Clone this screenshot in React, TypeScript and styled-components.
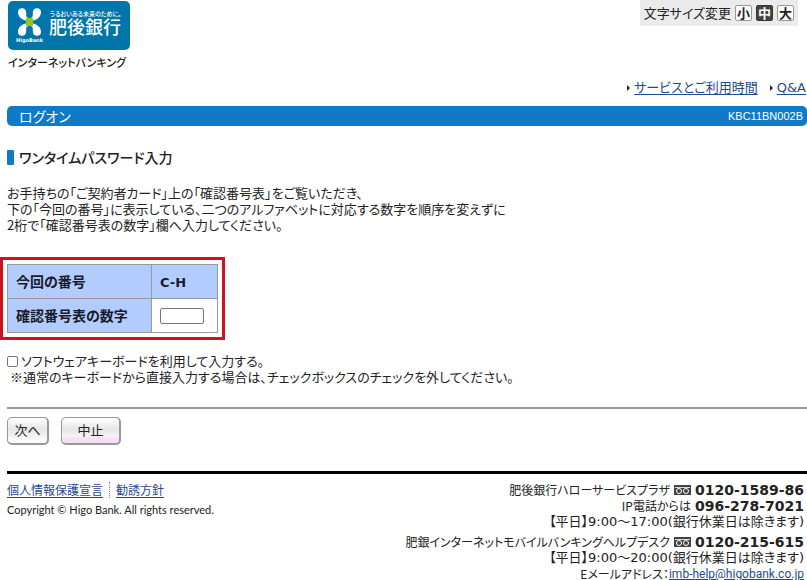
import React, { useState } from "react";
import styled, { createGlobalStyle } from "styled-components";

const sans = `"Noto Sans CJK JP", sans-serif`;
const wideLatin = `"DejaVu Sans", ${sans}`;

const GlobalStyle = createGlobalStyle`
  * { box-sizing: border-box; }
  body {
    margin: 0;
    background: #fff;
    color: #222;
    font-family: ${sans};
    font-size: 13px;
    line-height: 16px;
    font-feature-settings: "palt";
  }
  button, input { font: inherit; font-feature-settings: inherit; }
`;

const Page = styled.div`
  padding-left: 7px;
`;

const Header = styled.header`
  display: flex;
  justify-content: space-between;
  align-items: flex-start;
  height: 80px;
`;

const Brand = styled.div`
  padding: 1px 0 0 1px;
`;

const LogoSvg = styled.svg`
  display: block;
`;

const BrandCaption = styled.div`
  margin-top: 4px;
  font-size: 11px;
  font-weight: 500;
`;

const SizeBar = styled.div`
  display: flex;
  align-items: center;
  gap: 4px;
  height: 26px;
  margin-right: 9px;
  padding: 0 4px;
  background: #ebebeb;
`;

const SizeButton = styled.button<{ $active: boolean }>`
  display: flex;
  align-items: center;
  justify-content: center;
  width: 17px;
  height: 16px;
  padding: 0;
  border: 1px solid ${(p) => (p.$active ? "#333" : "#999")};
  border-radius: 2px;
  background: ${(p) => (p.$active ? "#444" : "#fff")};
  color: ${(p) => (p.$active ? "#fff" : "#222")};
  font-size: 13px;
  font-weight: 700;
`;

const Link = styled.a`
  color: #1f4a8f;
  text-decoration: underline;
  text-underline-offset: 2px;
`;

const HelpNav = styled.nav`
  display: flex;
  justify-content: flex-end;
  gap: 12px;
  padding-right: 1px;
  font-family: ${wideLatin};
`;

const HelpItem = styled.span`
  display: flex;
  align-items: center;
  gap: 4px;

  &::before {
    content: "";
    border: solid transparent;
    border-width: 3px 0 3px 3px;
    border-left-color: #222;
  }
`;

const TitleBar = styled.div`
  display: flex;
  align-items: center;
  justify-content: space-between;
  height: 20px;
  margin-top: 10px;
  padding: 0 4px 0 12px;
  border-radius: 5px;
  background: #107ac6;
  color: #fff;
`;

const Title = styled.h1`
  margin: 0;
  font-size: 14px;
  font-weight: 400;
`;

const ScreenCode = styled.span`
  font-family: "Liberation Sans", sans-serif;
  font-size: 11px;
`;

const SectionTitle = styled.h2`
  display: flex;
  align-items: center;
  gap: 5px;
  margin: 23px 0 0;
  font-size: 14px;
  font-weight: 500;

  &::before {
    content: "";
    width: 7px;
    height: 15px;
    border-radius: 1px;
    background: #107ac6;
  }
`;

const Lead = styled.p`
  margin: 20px 0 0;
`;

const Highlight = styled.div`
  width: fit-content;
  margin: 24px 0 0 -7px;
  padding: 4px;
  border: 3px solid #d0121b;
`;

const CodeTable = styled.table`
  border-collapse: collapse;
  font-family: ${sans};
  font-size: 14px;
  font-weight: 700;
  color: #1a1a2a;
`;

const HeadCell = styled.th`
  width: 144px;
  height: 34px;
  padding: 0 8px 2px;
  border: 1px solid #999;
  background: #b3ccff;
  text-align: left;
`;

const Cell = styled.td<{ $filled?: boolean }>`
  width: 66px;
  padding: 0 8px;
  border: 1px solid #999;
  background: ${(p) => (p.$filled ? "#b3ccff" : "#fff")};
`;

const CodePair = styled.span`
  font-family: "DejaVu Sans", sans-serif;
  font-size: 13px;
`;

const CodeInput = styled.input`
  display: block;
  width: 44px;
  height: 16px;
  padding: 0 3px;
  border: 1px solid #777;
  border-radius: 2px;
  background: #fff;
`;

const KeyboardOption = styled.div`
  margin-top: 13px;
`;

const CheckLabel = styled.label`
  display: flex;
  align-items: center;
  gap: 3px;
`;

const Checkbox = styled.input`
  appearance: none;
  width: 11px;
  height: 11px;
  margin: 0;
  border: 1px solid #777;
  border-radius: 2px;
  background: #fff;

  &:checked { background: #107ac6; }
`;

const Note = styled.p`
  margin: 0 0 0 3px;
`;

const Actions = styled.div`
  display: flex;
  gap: 12px;
  margin-top: 22px;
  padding: 8px 0 26px;
  border-top: 2px solid #999;
`;

const ActionButton = styled.button<{ $wide?: boolean }>`
  width: ${(p) => (p.$wide ? 60 : 42)}px;
  height: 28px;
  padding: 0 0 1px;
  border: 1px solid #999;
  border-width: 1px 2px 2px 1px;
  border-radius: 5px;
  background: ${(p) =>
    p.$wide
      ? "linear-gradient(#fff 0, #e6e6e6 45%, #f4f4f4 75%, #f8dff8 80%)"
      : "linear-gradient(#fff 0, #e6e6e6 45%, #fafafa 90%)"};
  color: #222;
`;

const Footer = styled.footer`
  display: flex;
  justify-content: space-between;
  padding: 8px 3px 0 0;
  border-top: 3px solid #000;
`;

const PolicyLinks = styled.div`
  display: flex;
  align-items: center;
  font-size: 12px;
`;

const Divider = styled.span`
  height: 16px;
  margin: 0 6px;
  border-left: 1px dotted #888;
`;

const Copyright = styled.small`
  display: block;
  margin-top: 4px;
  font-family: Lato, sans-serif;
  font-size: 11px;
`;

const Contact = styled.address`
  font-size: 12px;
  font-style: normal;
  text-align: right;
`;

const ContactGroup = styled.div`
  margin-bottom: 4px;
`;

const ContactLine = styled.div`
  display: flex;
  align-items: center;
  justify-content: flex-end;
  gap: 4px;
  height: 16px;
`;

const Phone = styled.b`
  font-family: "DejaVu Sans", sans-serif;
  font-size: 14px;
`;

const Hours = styled(ContactLine)`
  font-family: ${wideLatin};
  font-size: 13px;
`;

const MailLine = styled(ContactLine)`
  gap: 0;
`;

const MailLink = styled(Link)`
  font-family: Roboto, sans-serif;
  font-size: 12px;
  line-height: 14px;
  text-underline-offset: 1px;
`;

const Logo = () => (
  <LogoSvg width="122" height="49" viewBox="0 0 122 49" role="img" aria-label="肥後銀行">
    <rect width="122" height="49" rx="5" fill="#0075a9" />
    <g fill="#fff">
      <path id="petal" d="M10 11C10 8.500 11.500 7.200 14 7.200C16.800 7.200 18.200 9 18.200 12V14.500C18.200 16 19 16.800 21 17V20C15 19.500 10 16.500 10 11Z" />
      <use href="#petal" transform="matrix(-1 0 0 1 43 0)" />
      <use href="#petal" transform="matrix(1 0 0 -1 0 42)" />
      <use href="#petal" transform="matrix(-1 0 0 -1 43 42)" />
    </g>
    <rect x="18" y="17" width="7" height="8" fill="#94c61e" />
    <g fill="#fff" fontFamily={sans}>
      <text x="8" y="41" fontSize="5" fontWeight="700" fontFamily="DejaVu Sans, sans-serif">HigoBank</text>
      <text x="42" y="15" fontSize="6" fontWeight="500">うるおいある未来のために。</text>
      <text x="41" y="33" fontSize="18" fontWeight="500">肥後銀行</text>
    </g>
  </LogoSvg>
);

const FreeDial = () => (
  <svg width="17" height="10" viewBox="0 0 17 10" aria-hidden="true">
    <rect width="17" height="10" fill="#444" />
    <path d="M1 2.500H16" stroke="#ddd" strokeWidth="1" />
    <g fill="none" stroke="#fff" strokeWidth="1">
      <ellipse cx="5" cy="6" rx="2.500" ry="2.500" />
      <ellipse cx="12" cy="6" rx="2.500" ry="2.500" />
    </g>
  </svg>
);

const sizes = ["小", "中", "大"];

export default function App() {
  const [size, setSize] = useState("中");
  const [softKeyboard, setSoftKeyboard] = useState(false);

  return (
    <>
      <GlobalStyle />
      <Page>
        <Header>
          <Brand>
            <Logo />
            <BrandCaption>インターネットバンキング</BrandCaption>
          </Brand>
          <SizeBar>
            <span>文字サイズ変更</span>
            {sizes.map((s) => (
              <SizeButton key={s} type="button" $active={s === size} aria-pressed={s === size} onClick={() => setSize(s)}>
                {s}
              </SizeButton>
            ))}
          </SizeBar>
        </Header>
        <HelpNav>
          <HelpItem><Link href="#service">サービスとご利用時間</Link></HelpItem>
          <HelpItem><Link href="#qa">Q&amp;A</Link></HelpItem>
        </HelpNav>
        <TitleBar>
          <Title>ログオン</Title>
          <ScreenCode>KBC11BN002B</ScreenCode>
        </TitleBar>
        <main>
          <SectionTitle>ワンタイムパスワード入力</SectionTitle>
          <Lead>
            お手持ちの「ご契約者カード」上の「確認番号表」をご覧いただき、<br />
            下の「今回の番号」に表示している、二つのアルファベットに対応する数字を順序を変えずに<br />
            2桁で「確認番号表の数字」欄へ入力してください。
          </Lead>
          <Highlight>
            <CodeTable>
              <tbody>
                <tr>
                  <HeadCell scope="row">今回の番号</HeadCell>
                  <Cell $filled><CodePair>C-H</CodePair></Cell>
                </tr>
                <tr>
                  <HeadCell scope="row"><label htmlFor="code">確認番号表の数字</label></HeadCell>
                  <Cell><CodeInput id="code" type="text" maxLength={2} /></Cell>
                </tr>
              </tbody>
            </CodeTable>
          </Highlight>
          <KeyboardOption>
            <CheckLabel>
              <Checkbox type="checkbox" checked={softKeyboard} onChange={(e) => setSoftKeyboard(e.target.checked)} />
              ソフトウェアキーボードを利用して入力する。
            </CheckLabel>
            <Note>※通常のキーボードから直接入力する場合は、チェックボックスのチェックを外してください。</Note>
          </KeyboardOption>
          <Actions>
            <ActionButton type="button">次へ</ActionButton>
            <ActionButton type="button" $wide>中止</ActionButton>
          </Actions>
        </main>
        <Footer>
          <div>
            <PolicyLinks>
              <Link href="#privacy">個人情報保護宣言</Link>
              <Divider />
              <Link href="#solicitation">勧誘方針</Link>
            </PolicyLinks>
            <Copyright>Copyright © Higo Bank. All rights reserved.</Copyright>
          </div>
          <Contact>
            <ContactGroup>
              <ContactLine>肥後銀行ハローサービスプラザ <FreeDial /><Phone>0120-1589-86</Phone></ContactLine>
              <ContactLine>IP電話からは　<Phone>096-278-7021</Phone></ContactLine>
              <Hours>【平日】9:00～17:00(銀行休業日は除きます)</Hours>
            </ContactGroup>
            <ContactLine>肥銀インターネットモバイルバンキングヘルプデスク <FreeDial /><Phone>0120-215-615</Phone></ContactLine>
            <Hours>【平日】9:00～20:00(銀行休業日は除きます)</Hours>
            <MailLine>Eメールアドレス：<MailLink href="mailto:imb-help@higobank.co.jp">imb-help@higobank.co.jp</MailLink></MailLine>
          </Contact>
        </Footer>
      </Page>
    </>
  );
}
